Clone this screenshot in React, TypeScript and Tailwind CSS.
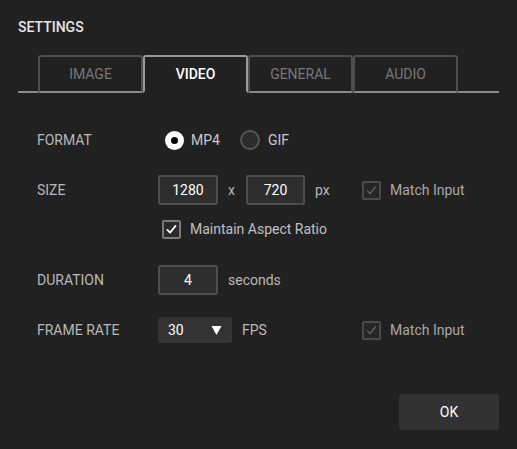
import { useState } from "react";

function Check({ dim }: { dim?: boolean }) {
  return (
    <span
      className={
        "flex h-[19px] w-[19px] items-center justify-center rounded-[2px] border-2 " +
        (dim ? "border-[#4a4a4a] bg-[#262626]" : "border-[#7a7a7a] bg-[#2a2a2a]")
      }
    >
      <svg viewBox="0 0 16 16" className="h-[13px] w-[13px]" fill="none">
        <path
          d="M3 8.5l3.2 3.3L13 3.5"
          stroke={dim ? "#6a6a6a" : "#ffffff"}
          strokeWidth={dim ? 1.6 : 2.2}
          strokeLinecap="round"
          strokeLinejoin="round"
        />
      </svg>
    </span>
  );
}

function Field({ value, w = "w-[60px]" }: { value: string; w?: string }) {
  return (
    <div
      className={
        w +
        " flex h-[30px] items-center justify-center rounded-[2px] border-2 border-[#4d4d4d] bg-[#2e2e2e] text-[14px] text-white"
      }
    >
      {value}
    </div>
  );
}

function MatchInput() {
  return (
    <div className="flex items-center">
      <Check dim />
      <span className="ml-[9px] text-[#a8a8a8]">Match Input</span>
    </div>
  );
}

export default function App() {
  const [tab, setTab] = useState("VIDEO");
  const tabs = ["IMAGE", "VIDEO", "GENERAL", "AUDIO"];

  return (
    <div
      className="flex h-[449px] w-[517px] flex-col bg-[#212121] px-[18px] text-[14px] text-[#b8b8b8]"
      style={{ fontFamily: "Roboto, 'Liberation Sans', sans-serif" }}
    >
      <div className="mt-[19px] text-[14px] font-medium leading-[17px] text-[#e6e6e6]">SETTINGS</div>

      {/* tabs */}
      <div className="mt-[19px] flex border-b-2 border-[#8a8a8a] pl-[20px]">
        {tabs.map((t) => {
          const active = t === tab;
          return (
            <button
              key={t}
              onClick={() => setTab(t)}
              className={
                "-mb-[2px] flex h-[38px] w-[105px] items-center justify-center rounded-t-[3px] border-2 text-[14px] " +
                (active
                  ? "border-[#9a9a9a] border-b-[#212121] bg-[#212121] font-medium text-white"
                  : "border-[#4e4e4e] border-b-[#8a8a8a] text-[#777777]")
              }
            >
              {t}
            </button>
          );
        })}
      </div>

      <div className="mt-[32px] flex flex-col pl-[19px]">
        {/* format */}
        <div className="flex h-[30px] items-center">
          <span className="w-[121px]">FORMAT</span>
          <span className="ml-[7px] flex h-[19px] w-[19px] items-center justify-center rounded-full bg-white">
            <span className="h-[7px] w-[7px] rounded-full bg-black" />
          </span>
          <span className="ml-[7px] text-[#c8c8c8]">MP4</span>
          <span className="ml-[20px] h-[20px] w-[20px] rounded-full border-2 border-[#555555] bg-[#2c2c2c]" />
          <span className="ml-[8px] text-[#c8c8c8]">GIF</span>
        </div>

        {/* size */}
        <div className="mt-[20px] flex h-[30px] items-center">
          <span className="w-[121px]">SIZE</span>
          <div className="flex w-[204px] items-center">
            <Field value="1280" />
            <span className="ml-[10px]">x</span>
            <div className="ml-[11px]">
              <Field value="720" w="w-[59px]" />
            </div>
            <span className="ml-[10px]">px</span>
          </div>
          <MatchInput />
        </div>

        {/* aspect */}
        <div className="mt-[14px] flex h-[20px] items-center pl-[125px]">
          <Check />
          <span className="ml-[9px] text-[#c0c0c0]">Maintain Aspect Ratio</span>
        </div>

        {/* duration */}
        <div className="mt-[26px] flex h-[30px] items-center">
          <span className="w-[121px]">DURATION</span>
          <Field value="4" />
          <span className="ml-[10px]">seconds</span>
        </div>

        {/* frame rate */}
        <div className="mt-[20px] flex h-[30px] items-center">
          <span className="w-[121px]">FRAME RATE</span>
          <div className="flex w-[204px] items-center">
            <div className="flex h-[26px] w-[74px] items-center justify-between rounded-[3px] bg-[#333333] pl-[10px] pr-[10px] text-[14px] text-white">
              <span>30</span>
              <svg viewBox="0 0 10 10" className="h-[10px] w-[11px]">
                <path d="M0 1h10L5 10z" fill="#ffffff" />
              </svg>
            </div>
            <span className="ml-[10px]">FPS</span>
          </div>
          <MatchInput />
        </div>
      </div>

      <div className="mt-[49px] flex justify-end">
        <button className="h-[36px] w-[100px] rounded-[3px] bg-[#323232] text-[14px] text-white">OK</button>
      </div>
    </div>
  );
}
